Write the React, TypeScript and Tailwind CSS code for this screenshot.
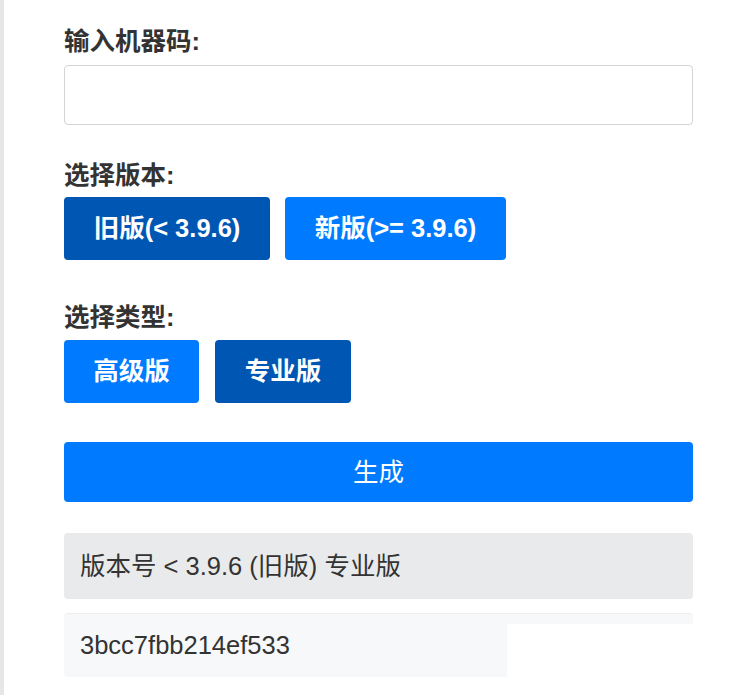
import React from 'react'

const font = { fontFamily: '"Liberation Sans", "Noto Sans CJK SC", sans-serif' }

const App = () => {
  return (
    <div className="flex min-h-[695px] bg-white text-[#333]" style={font}>
      <div className="w-[4px] bg-[#e6e6e6]" />
      <div className="w-[629px] ml-[60px] pt-[23px]">
        <div className="text-[25.5px] leading-[36px] font-bold mb-[6px]">输入机器码:</div>
        <input
          className="block w-full h-[60px] border border-[#d4d4d4] rounded-[4px] px-3 outline-none"
          type="text"
        />
        <div className="text-[25.5px] leading-[36px] font-bold mt-[32px] mb-[4px]">选择版本:</div>
        <div className="flex gap-[15px]">
          <button className="h-[63px] w-[206px] rounded-[4px] bg-[#0056b3] text-white text-[25.5px] font-bold">
            旧版(&lt; 3.9.6)
          </button>
          <button className="h-[63px] w-[221px] rounded-[4px] bg-[#007bff] text-white text-[25.5px] font-bold">
            新版(&gt;= 3.9.6)
          </button>
        </div>
        <div className="text-[25.5px] leading-[36px] font-bold mt-[39px] mb-[5px]">选择类型:</div>
        <div className="flex gap-[16px]">
          <button className="h-[63px] w-[135px] rounded-[4px] bg-[#007bff] text-white text-[25.5px] font-bold">
            高级版
          </button>
          <button className="h-[63px] w-[136px] rounded-[4px] bg-[#0056b3] text-white text-[25.5px] font-bold">
            专业版
          </button>
        </div>
        <button className="block w-full h-[60px] mt-[39px] rounded-[4px] bg-[#007bff] text-white text-[25.5px]">
          生成
        </button>
        <div className="mt-[31px] h-[66px] rounded-[4px] bg-[#e9eaec] px-4 flex items-center text-[25.5px]">
          版本号 &lt; 3.9.6 (旧版) 专业版
        </div>
        <div className="relative mt-[14px] h-[64px] rounded-[4px] bg-[#f7f8f9] border-t border-[#eeeeee] px-4 flex items-center text-[25.5px]">
          3bcc7fbb214ef533
          <div className="absolute left-[443px] top-[10px] w-[220px] h-[56px] bg-white" />
        </div>
      </div>
    </div>
  )
}

export default App
